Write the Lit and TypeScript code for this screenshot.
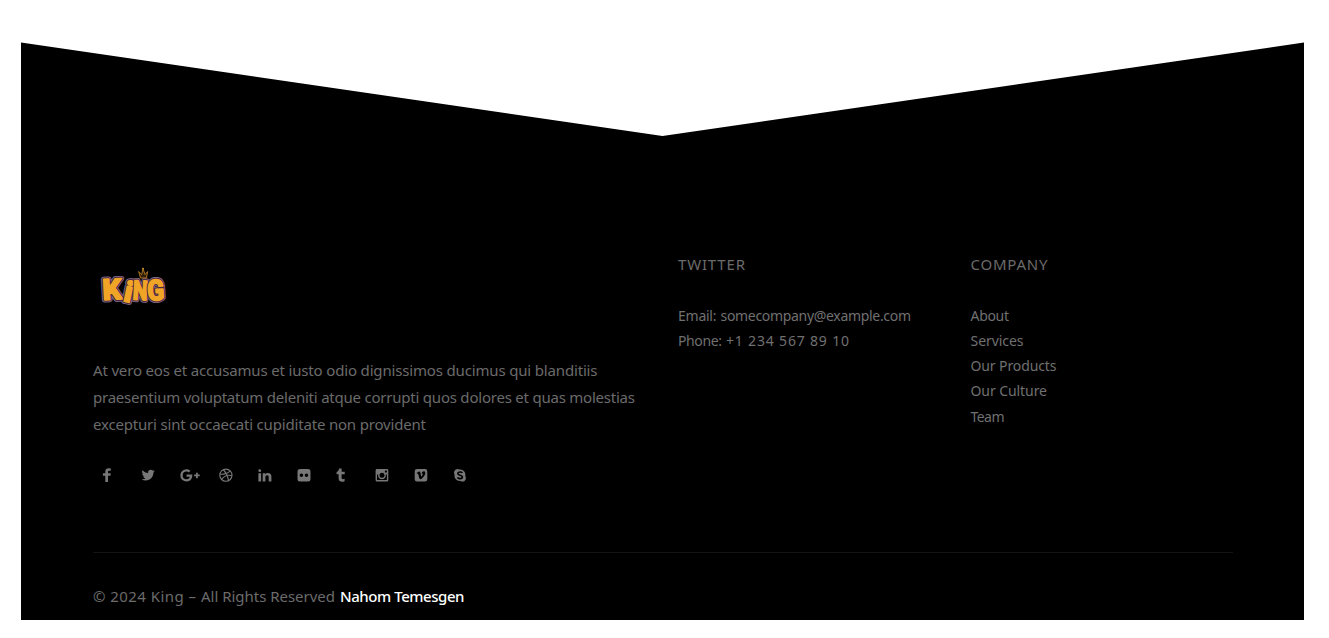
import { LitElement, html, css, svg } from "lit";
import { customElement, property } from "lit/decorators.js";

/** One run of text whose tracking is tuned to fill a given measure. */
@customElement("fit-line")
class FitLine extends LitElement {
  @property({ type: Number }) measure = 100;
  static styles = css`
    :host { display: block; white-space: nowrap; }
    .line { display: inline-block; }
  `;
  render() {
    return html`<span class="line"><slot></slot></span>`;
  }
  firstUpdated() {
    const line = this.renderRoot.querySelector(".line") as HTMLElement;
    const count = (this.textContent || "").trim().length;
    const natural = line.getBoundingClientRect().width;
    line.style.letterSpacing = (this.measure - natural) / (count - 1) + "px";
    this.style.width = this.measure + "px";
  }
}

const icons = [
  { name: "Facebook", x: 0, w: 9, art: svg`<path d="M8.8 0.4V2.7H7.3C6.3 2.7 6 3.1 6 3.9V5.2H8.7L8.4 7.7H6V14H3.3V7.7H.9V5.2H3.3V3.5C3.3 1.4 4.7 .3 6.7 .3Z"/>` },
  { name: "Twitter", x: 1, w: 14, art: svg`<path transform="translate(-.4 .5) scale(.55)" d="M23.95 4.57a10 10 0 0 1-2.82.77 4.96 4.96 0 0 0 2.16-2.72c-.95.55-2 .95-3.13 1.18a4.92 4.92 0 0 0-8.38 4.48C7.69 8.1 4.07 6.13 1.64 3.16a4.93 4.93 0 0 0 1.52 6.57 4.9 4.9 0 0 1-2.23-.61v.06a4.92 4.92 0 0 0 3.95 4.83 5 5 0 0 1-2.21.08 4.94 4.94 0 0 0 4.6 3.42A9.87 9.87 0 0 1 0 19.54a14 14 0 0 0 7.55 2.21c9.05 0 14-7.5 14-13.98 0-.21 0-.42-.02-.63a9.94 9.94 0 0 0 2.46-2.55z"/>` },
  { name: "Google Plus", x: 0, w: 21, art: svg`<path d="M6.5 6.6H12.3C12.7 10.3 10.5 13.6 6.5 13.6A6.2 6.2 0 0 1 6.5 1.2C8.2 1.2 9.5 1.8 10.5 2.7L8.8 4.4A3.3 3.3 0 0 0 6.5 3.6A3.8 3.8 0 0 0 6.5 11.2C8.4 11.2 9.6 10.1 9.8 8.8H6.5ZM16 4.7H17.8V6.5H19.7V8.3H17.8V10.2H16V8.3H14.1V6.5H16Z"/>` },
  { name: "Dribbble", x: 0, w: 14, art: svg`<g fill="none" stroke="currentColor" stroke-width="1.1"><circle cx="6.9" cy="7.2" r="6.1"/><path d="M4.4 1.7C7.1 4.7 8.8 8.4 9.6 12.5M.9 6.2C5 6.3 9 5.4 11.2 2.8M2.8 11.6C4.8 8.1 8.8 6.6 13 7.7"/></g>` },
  { name: "LinkedIn", x: 0, w: 14, art: svg`<path d="M.4 5.2H3.1V13.4H.4ZM1.8 1.2A1.4 1.4 0 1 1 1.7 4.1A1.4 1.4 0 0 1 1.8 1.2ZM4.7 5.2H7.3V6.4C7.8 5.6 8.6 5 9.9 5C12.3 5 13.4 6.3 13.4 8.7V13.4H10.7V9.1C10.7 7.9 10.2 7.2 9.2 7.2C8 7.2 7.4 8 7.4 9.1V13.4H4.7Z"/>` },
  { name: "Flickr", x: 0, w: 14, art: svg`<path fill-rule="evenodd" d="M3 .9H11A2.5 2.5 0 0 1 13.5 3.4V11.1A2.5 2.5 0 0 1 11 13.6H3A2.5 2.5 0 0 1 .5 11.1V3.4A2.5 2.5 0 0 1 3 .9ZM4.4 5.4A1.8 1.8 0 1 0 4.4 9A1.8 1.8 0 1 0 4.4 5.4ZM9.5 5.4A1.8 1.8 0 1 0 9.5 9A1.8 1.8 0 1 0 9.5 5.4Z"/>` },
  { name: "Tumblr", x: 0, w: 10, art: svg`<path d="M3 .5H5.6V3.8H8.7V6.3H5.6V9.6C5.6 11.4 6.8 11.6 8.6 10.8V13.3C5.6 14.5 2.6 13.6 2.6 10.6V6.3H.6V4.1C2.2 3.6 2.8 2.4 3 .5Z"/>` },
  { name: "Instagram", x: 0, w: 14, art: svg`<path fill-rule="evenodd" d="M2 1.1H12A1.4 1.4 0 0 1 13.3 2.4V12.3A1.4 1.4 0 0 1 12 13.6H2A1.4 1.4 0 0 1 .6 12.3V2.4A1.4 1.4 0 0 1 2 1.1ZM2 6.4V11.6Q2 12.1 2.5 12.1H11.4Q11.9 12.1 11.9 11.6V6.4H10.7A3.9 3.9 0 1 1 3.2 6.4ZM7 4.8A2.5 2.5 0 1 0 7 9.8A2.5 2.5 0 0 0 7 4.8ZM9.9 2.5V4.6H11.9V2.5Z"/>` },
  { name: "Vimeo", x: 0, w: 14, art: svg`<path fill-rule="evenodd" d="M3.1 1.1H10.9A2.4 2.4 0 0 1 13.3 3.5V11.2A2.4 2.4 0 0 1 10.9 13.6H3.1A2.4 2.4 0 0 1 .7 11.2V3.5A2.4 2.4 0 0 1 3.1 1.1ZM2.6 5.2L3.1 5.9C3.8 5.4 4 5.5 4.4 6.8L5.1 9.6C5.6 11.6 6.6 11.8 8.2 10.2C10.2 8.2 11.3 6.3 11.3 4.9C11.2 2.8 8.4 2.7 7.6 5.5C8.9 5.1 9.1 6 8.2 7.6C7.4 9 7.1 8.6 6.8 6.8C6.5 4.8 6.4 3.5 5.3 3.5C4.5 3.5 3.6 4.3 2.6 5.2Z"/>` },
  { name: "Skype", x: 0, w: 14, art: svg`<path d="M4.4 1C5.2 1 5.9 1.2 6.5 1.6C10.4 1.2 13 4.5 12.3 7.9C13.8 10.4 12.2 13.6 9.6 13.6C8.8 13.6 8.1 13.4 7.5 13C3.7 13.4 .9 10.2 1.6 6.8C.2 4.2 1.8 1 4.4 1Z"/><path d="M9.3 5C8.6 3.6 4.8 3.7 4.8 5.5C4.8 7.7 9.4 6.7 9.4 9C9.4 11 5.3 11.1 4.5 9.4" fill="none" stroke="#000" stroke-width="1.6"/>` },
];

type Run = [string, number];

const blurb: Run[] = [
  ["At vero eos et accusamus et iusto odio dignissimos ducimus qui blanditiis", 504.5],
  ["praesentium voluptatum deleniti atque corrupti quos dolores et quas molestias", 542],
  ["excepturi sint occaecati cupiditate non provident", 333],
];
const contact: Run[][] = [
  [["Email:", 38.5], ["somecompany@example.com", 190.5]],
  [["Phone:", 44], ["+1 234 567 89 10", 123]],
];
const company: Run[] = [
  ["About", 38.5],
  ["Services", 53],
  ["Our Products", 86],
  ["Our Culture", 76.5],
  ["Team", 34],
];

const letters = [
  { ch: "K", place: "translate(10 49) rotate(-3) scale(1.04 1)", size: 29 },
  { ch: "i", place: "translate(29.4 50) rotate(12) scale(1.05 1)", size: 29 },
  { ch: "N", place: "translate(39.4 48.4) rotate(3) scale(.78 1)", size: 27 },
  { ch: "G", place: "translate(54.8 49.8) rotate(-3) scale(.86 1)", size: 29 },
];

@customElement("app-root")
class AppRoot extends LitElement {
  static styles = css`
    :host {
      display: block;
      height: 638px;
      box-sizing: border-box;
      padding: 42px 25px 18px 21px;
      background: #fff;
      overflow: hidden;
      font: 15px/27px "Noto Sans", "Open Sans", sans-serif;
      color: #6b6b6b;
    }
    .footer {
      height: 578px;
      box-sizing: border-box;
      padding: 209px 71px 0 72px;
      background: #000;
      clip-path: polygon(0 0.6px, 50% 94px, 100% 0.6px, 100% 100%, 0 100%);
    }
    .columns {
      display: grid;
      grid-template-columns: 585px 292.5px 1fr;
      height: 301px;
      border-bottom: 1px solid #131313;
    }
    .logo { display: block; width: 80px; height: 62px; margin-bottom: 44px; }
    .social { display: flex; margin: 30px 0 0 9px; }
    .social a { display: block; width: 39px; height: 16px; color: #777; }
    .social svg { display: block; fill: currentColor; }
    .heading { margin-bottom: 25px; }
    .list { font-size: 14px; line-height: 25.15px; color: #707070; }
    .row { display: flex; gap: 4px; }
    .bottom { display: flex; gap: 5px; padding-top: 30px; }
    .owner { color: #fff; font-weight: 500; }
  `;

  private lines(rows: Run[]) {
    return rows.map(([text, width]) => html`<fit-line .measure=${width}>${text}</fit-line>`);
  }

  private logo() {
    const glyph = (l: (typeof letters)[number], color: string, stroke: number) => svg`
      <text transform=${l.place} font-size=${l.size} fill=${color} stroke=${color} stroke-width=${stroke}>${l.ch}</text>`;
    return html`<svg class="logo" viewBox="0 0 80 62" role="img" aria-label="King"
      font-family="Roboto, 'Noto Sans', sans-serif" font-weight="900" stroke-linejoin="round">
      ${letters.map((l) => glyph(l, "#8d7898", 5))}
      ${letters.map((l) => svg`${glyph(l, "#4a2440", 3.6)}${glyph(l, "#f0a527", 1.5)}`)}
      <path d="M47.5 27L45.6 20.5L48.7 23.5L50 17.5L52 23.5L54.6 20.5L53.5 27Z" fill="#33200b" stroke="#b47c21" stroke-width=".9"/>
      <circle cx="50" cy="17.6" r=".9" fill="#d89b30"/>
    </svg>`;
  }

  render() {
    return html`<footer class="footer">
      <div class="columns">
        <section>
          ${this.logo()}
          ${this.lines(blurb)}
          <nav class="social">
            ${icons.map((i) => html`<a aria-label=${i.name}>
              <svg width=${i.w + i.x} height="16" viewBox="${-i.x} 0 ${i.w + i.x} 16">${i.art}</svg>
            </a>`)}
          </nav>
        </section>
        <section>
          <div class="heading"><fit-line .measure=${67}>TWITTER</fit-line></div>
          <div class="list">${contact.map((row) => html`<div class="row">${this.lines(row)}</div>`)}</div>
        </section>
        <section>
          <div class="heading"><fit-line .measure=${77}>COMPANY</fit-line></div>
          <div class="list">${this.lines(company)}</div>
        </section>
      </div>
      <div class="bottom">
        <fit-line .measure=${103}>© 2024 King –</fit-line>
        <fit-line .measure=${134}>All Rights Reserved</fit-line>
        <fit-line class="owner" .measure=${124.5}>Nahom Temesgen</fit-line>
      </div>
    </footer>`;
  }
}
